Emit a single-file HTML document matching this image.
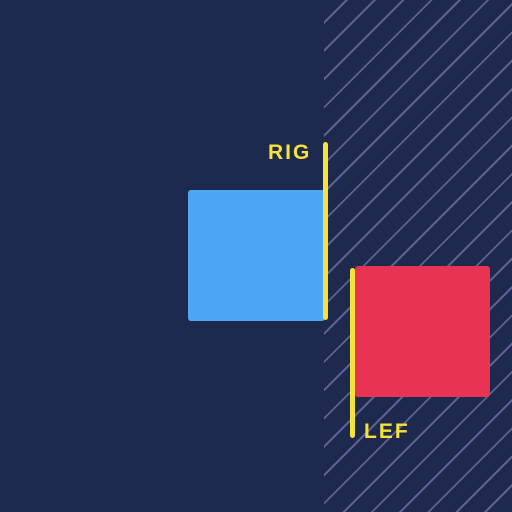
<!DOCTYPE html><html><head><style>
body{margin:0;width:512px;height:512px;background:#1e2a4d;position:relative;overflow:hidden;font-family:"Liberation Sans",sans-serif}
.h{position:absolute;left:324px;top:0;width:188px;height:512px;background:repeating-linear-gradient(-45deg,transparent 0 18px,#5f5f92 18px 20px)}
.b{position:absolute;left:188px;top:190px;width:137px;height:131px;background:#4da6f5;border-radius:3px}
.r{position:absolute;left:355px;top:266px;width:135px;height:131px;background:#e83352;border-radius:3px}
.y{position:absolute;background:#f5e23a;width:5px;border-radius:3px}
.t{position:absolute;color:#f5e23a;font-weight:bold;font-size:21px;letter-spacing:2px}
</style></head><body>
<div class="h"></div>
<div class="b"></div>
<div class="r"></div>
<div class="y" style="left:323px;top:142px;height:178px"></div>
<div class="y" style="left:350px;top:268px;height:170px"></div>
<div class="t" style="left:268px;top:141px">RIG</div>
<div class="t" style="left:364px;top:420px">LEF</div>
</body></html>
